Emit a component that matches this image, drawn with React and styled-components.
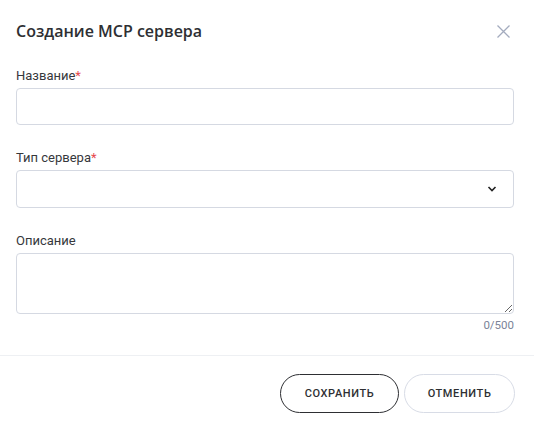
import React from "react";
import styled, { createGlobalStyle } from "styled-components";

const Global = createGlobalStyle`
  html, body { margin: 0; padding: 0; background: #fff; }
  body { font-family: Roboto, "Liberation Sans", sans-serif; }
  * { box-sizing: border-box; }
`;

const Dialog = styled.div`
  width: 534px;
  height: 422px;
  background: #fff;
  display: flex;
  flex-direction: column;
`;

const Header = styled.div`
  display: flex;
  align-items: center;
  justify-content: space-between;
  padding: 20px 24px 0 16px;
  height: 42px;
`;

const Title = styled.h2`
  margin: 0;
  font-family: "Open Sans", sans-serif;
  font-weight: 600;
  font-size: 16px;
  color: #2e2f33;
`;

const Close = styled.button`
  border: 0;
  background: none;
  padding: 0;
  width: 14px;
  height: 14px;
  display: flex;
  align-items: center;
  justify-content: center;
  cursor: pointer;
`;

const Body = styled.div`
  padding: 26px 20px 0 16px;
  display: flex;
  flex-direction: column;
`;

const Field = styled.div`
  display: flex;
  flex-direction: column;
  margin-bottom: ${(p) => p.$mb || 0}px;
`;

const Label = styled.label`
  font-size: 13px;
  font-weight: 400;
  color: #36383c;
  line-height: 16px;
  margin-bottom: 4px;
`;

const Req = styled.span`
  color: #e5484d;
`;

const Input = styled.input`
  height: 37px;
  border: 1px solid #d5d9e2;
  border-radius: 4px;
  font: inherit;
  outline: none;
`;

const SelectBox = styled.div`
  height: 38px;
  border: 1px solid #d5d9e2;
  border-radius: 4px;
  display: flex;
  align-items: center;
  justify-content: flex-end;
  padding-right: 16px;
`;

const TextArea = styled.textarea`
  height: 61px;
  border: 1px solid #d5d9e2;
  border-radius: 4px;
  font: inherit;
  outline: none;
  resize: vertical;
`;

const Counter = styled.div`
  text-align: right;
  font-size: 11.5px;
  color: #7b8398;
  margin-top: 4px;
  line-height: 14px;
`;

const Divider = styled.div`
  height: 1px;
  background: #eef0f3;
  margin-top: 23px;
`;

const Footer = styled.div`
  display: flex;
  justify-content: flex-end;
  gap: 5px;
  padding: 18px 19px 0 0;
`;

const Button = styled.button`
  height: 39px;
  width: ${(p) => p.$w}px;
  border-radius: 20px;
  background: #fff;
  border: 1px solid ${(p) => (p.$primary ? "#2e2f33" : "#d8dce6")};
  font-family: Roboto, sans-serif;
  font-size: 11px;
  font-weight: 500;
  letter-spacing: 0.6px;
  color: #2e2f33;
  cursor: pointer;
`;

export default function App() {
  return (
    <>
      <Global />
      <Dialog>
        <Header>
          <Title>Создание МСР сервера</Title>
          <Close aria-label="close">
            <svg width="13" height="13" viewBox="0 0 13 13">
              <path d="M0.5 0.5L12.5 12.5M12.5 0.5L0.5 12.5" stroke="#a3abbe" strokeWidth="1.3" />
            </svg>
          </Close>
        </Header>
        <Body>
          <Field $mb={25}>
            <Label>
              Название<Req>*</Req>
            </Label>
            <Input />
          </Field>
          <Field $mb={25}>
            <Label>
              Тип сервера<Req>*</Req>
            </Label>
            <SelectBox>
              <svg width="10" height="6" viewBox="0 0 10 6">
                <path d="M1.5 1L5 4.5L8.5 1" stroke="#222" strokeWidth="1.6" fill="none" />
              </svg>
            </SelectBox>
          </Field>
          <Field>
            <Label>Описание</Label>
            <TextArea />
            <Counter>0/500</Counter>
          </Field>
        </Body>
        <Divider />
        <Footer>
          <Button $primary $w={119}>СОХРАНИТЬ</Button>
          <Button $w={111}>ОТМЕНИТЬ</Button>
        </Footer>
      </Dialog>
    </>
  );
}
